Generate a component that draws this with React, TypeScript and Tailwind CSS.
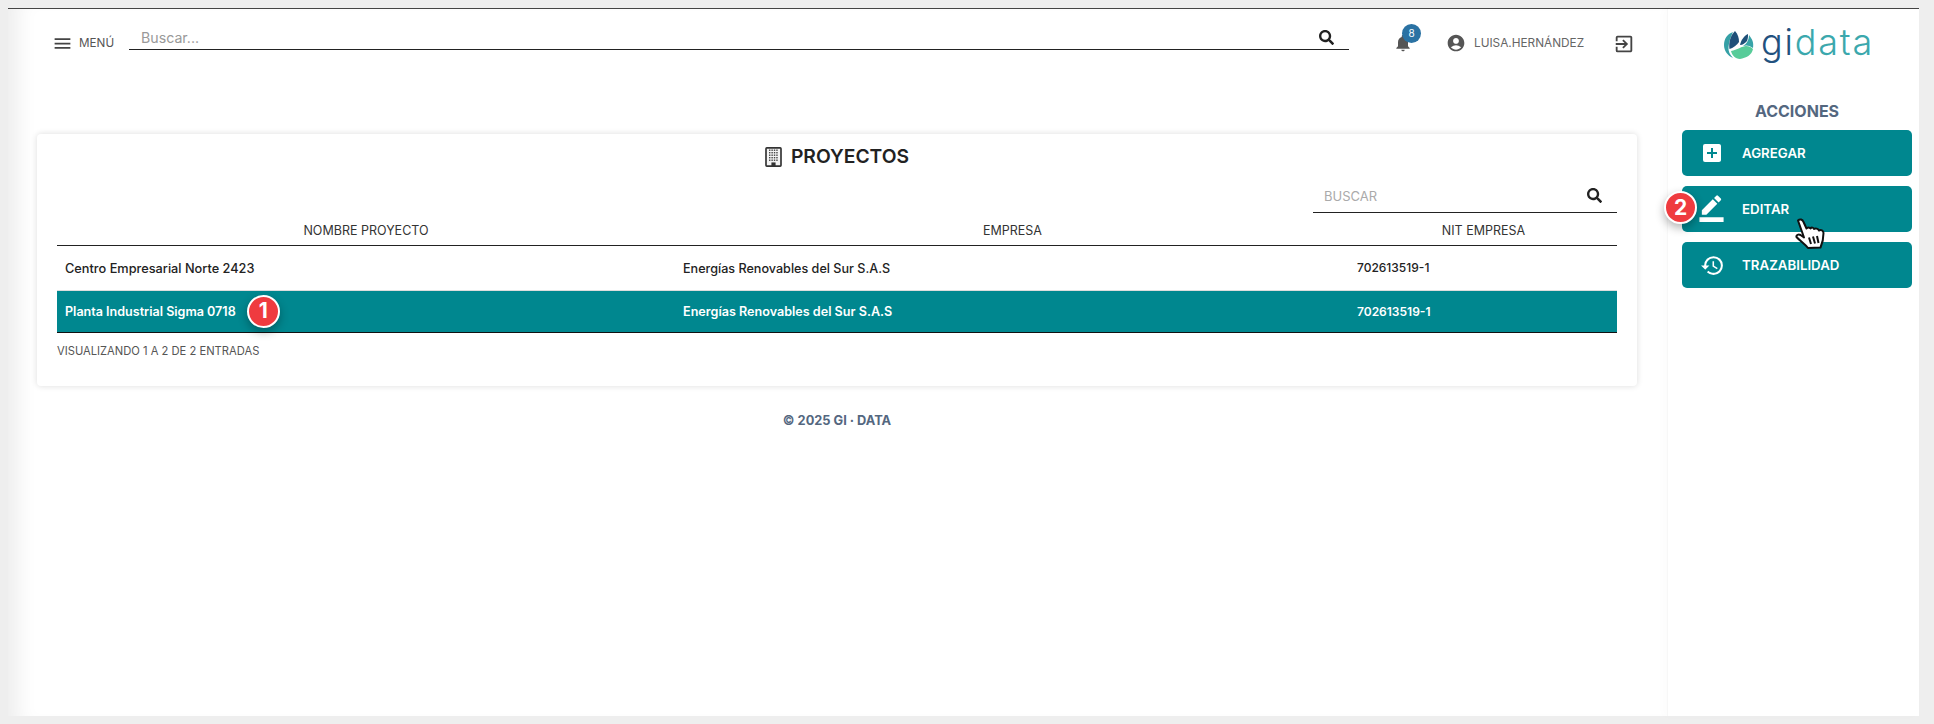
import React from "react";
import { MdMenu, MdNotifications, MdAccountCircle, MdOutlineExitToApp, MdAddBox, MdBorderColor, MdHistory } from "react-icons/md";
import { FaSearch } from "react-icons/fa";

const font = { fontFamily: "Inter, 'Noto Sans', sans-serif" };

function BuildingIcon() {
  const dots = [];
  for (let r = 0; r < 5; r++) for (let c = 0; c < 4; c++) dots.push(<rect key={`${r}-${c}`} x={4.6 + c * 2.9} y={3 + r * 3} width="1.7" height="1.7" fill="#444" />);
  return (
    <svg viewBox="0 0 20 24" className="w-[17px] h-[20px]">
      <rect x="1" y="1" width="18" height="22" rx="1" fill="#f4f4f4" stroke="#333" strokeWidth="2" />
      {dots}
      <rect x="7.5" y="18.5" width="5" height="4.5" fill="#333" />
    </svg>
  );
}

function LogoMark() {
  return (
    <svg viewBox="0 0 30 28" className="w-[30px] h-[28px] shrink-0">
      <path d="M9 1C3 3 0 8 0 14C0 20 4 25 9 27C6 24 4 20 4.5 16C5 10 7 5 9 1Z" fill="#35a0a6" />
      <path d="M11 0C6 5 4.5 12 5.5 18C9 17 13 14 15 11C15 7 14 3 11 0Z" fill="#1f5079" />
      <path d="M24 3C20 5 17 9 16 14C19 14 21 12 23 10C24 8 24 5 24 3Z" fill="#1f5079" />
      <path d="M25 4C28 8 30 11 29 17C25 14 22 14 19 15C23 13 25 8 25 4Z" fill="#38a3a8" />
      <path d="M7 20C13 19 18 15 22 15C25 15 27 16 29 18C28 24 22 27 16 28C11 28 8 24 7 20Z" fill="#57cc99" />
    </svg>
  );
}

function Hand() {
  return (
    <svg viewBox="0 0 30 31" className="w-[30px] h-[31px]">
      <path d="M3 2.5C5 0.5 7.5 1.5 8.5 4L11.5 10.5C12.5 9 14.5 9 15.5 10.5C16.5 9 18.5 9.5 19 11C20.5 10 23 10.5 24 12.5C26 11.5 28.5 12.5 28.5 15C28.5 19 27.5 25 25.5 29.5L13 30C10 26 5 23 1.5 19C1 17 3.5 16 5.5 17L9 19.5Z" fill="#fff" stroke="#111" strokeWidth="2" strokeLinejoin="round" />
      <path d="M14 19.5L16 26M18 18.5L20 25.5M22 18L23.5 25" stroke="#111" strokeWidth="2" fill="none" />
    </svg>
  );
}

function Step({ n }: { n: number }) {
  return (
    <span className="flex w-[33px] h-[33px] items-center justify-center rounded-full bg-[#ef3b3f] border-2 border-white text-white text-[21px] font-bold shadow-[0_4px_10px_rgba(0,0,0,0.3)]">
      {n}
    </span>
  );
}

function ActionButton({ icon, label, children }: { icon: React.ReactNode; label: string; children?: React.ReactNode }) {
  return (
    <div className="relative flex h-[46px] items-center rounded-[5px] bg-[#00878f] text-white">
      <span className="flex w-[60px] shrink-0 justify-center">{icon}</span>
      <span className="pt-[1px] text-[13.3px] font-semibold">{label}</span>
      {children}
    </div>
  );
}

const rows = [
  { name: "Centro Empresarial Norte 2423", company: "Energías Renovables del Sur S.A.S", nit: "702613519-1" },
  { name: "Planta Industrial Sigma 0718", company: "Energías Renovables del Sur S.A.S", nit: "702613519-1" },
];

export default function App() {
  return (
    <div style={font} className="h-[724px] bg-[#eeeeee] pt-2 pb-2 pl-2 pr-[15px]">
      <div className="flex h-[708px] border-t border-[#444] bg-white">
        <main className="flex-1 min-w-0 pl-[29px] pr-[30px] shadow-[inset_24px_0_20px_-14px_#eeeeee]">
          <header className="flex h-[53px] items-start pt-[24px] pl-[15px]">
            <MdMenu className="w-[21px] h-[21px] mr-[6px] text-[#444]" />
            <span className="text-[11.7px] leading-[21px] mr-[15px] w-[35px] text-[#555] whitespace-nowrap">MENÚ</span>
            <div className="-mt-[6px] flex h-[23px] w-[1220px] items-center justify-between border-b border-[#222] pl-[12px] pr-[15px] pb-[1px]">
              <span className="text-[14.2px] text-[#999]">Buscar...</span>
              <FaSearch className="w-[15px] h-[15px] mb-[1px] text-[#222]" />
            </div>
            <div className="relative ml-[44px]">
              <MdNotifications className="w-[20px] h-[20px] text-[#555]" />
              <span className="absolute left-[9px] top-[-9px] flex h-[19px] w-[19px] items-center justify-center rounded-full bg-[#2a72a3] text-[10px] text-white">8</span>
            </div>
            <MdAccountCircle className="ml-[33px] w-[20px] h-[20px] text-[#555] mr-[8px]" />
            <span className="text-[11.8px] leading-[20px] text-[#666] w-[139px]">LUISA.HERNÁNDEZ</span>
            <MdOutlineExitToApp className="w-[22px] h-[22px] text-[#444]" />
          </header>

          <section className="mt-[72px] h-[252px] rounded-[4px] bg-white px-[20px] shadow-[0_0_6px_rgba(0,0,0,0.14)]">
            <h1 className="flex h-[44px] items-center justify-center gap-[9px] pt-[1px] text-[19.3px] font-semibold text-[#222]">
              <BuildingIcon />
              PROYECTOS
            </h1>
            <div className="flex justify-end">
              <div className="mt-[2px] flex h-[33px] w-[304px] items-center justify-between border-b border-[#222] pl-[11px] pr-[15px] pt-[1px]">
                <span className="text-[13px] text-[#aaa]">BUSCAR</span>
                <FaSearch className="w-[15px] h-[15px] text-[#222] mb-[3px]" />
              </div>
            </div>
            <table className="w-[1560px] table-fixed border-collapse">
              <colgroup>
                <col className="w-[618px]" />
                <col className="w-[675px]" />
                <col className="w-[267px]" />
              </colgroup>
              <thead>
                <tr className="h-[32px] border-b border-[#222]">
                  {["NOMBRE PROYECTO", "EMPRESA", "NIT EMPRESA"].map((h) => (
                    <th key={h} className="pt-[5px] text-center text-[12.5px] font-normal text-[#333]">{h}</th>
                  ))}
                </tr>
              </thead>
              <tbody>
                {rows.map((r, i) => (
                  <tr key={r.name} className={i === 1 ? "h-[42px] bg-[#00878f] text-white font-semibold border-b border-[#111]" : "h-[45px] text-[#222] font-medium border-b border-[#ddd]"}>
                    <td className={i === 1 ? "pl-[8px] pt-[3px] text-[12.55px]" : "pl-[8px] pt-[2px] text-[12.75px]"}>
                      <span className="inline-flex items-center">
                        {r.name}
                        {i === 1 && (
                          <span className="relative ml-[11px] h-0 w-[33px]">
                            <span className="absolute left-0 top-[-18px]"><Step n={1} /></span>
                          </span>
                        )}
                      </span>
                    </td>
                    <td className="pl-[8px] pt-[3px] text-[12.6px]">{r.company}</td>
                    <td className="pl-[7px] pt-[1px] text-[12px]">{r.nit}</td>
                  </tr>
                ))}
              </tbody>
            </table>
            <p className="mt-[10px] text-[11.2px] text-[#555]">VISUALIZANDO 1 A 2 DE 2 ENTRADAS</p>
          </section>

          <footer className="mt-[25px] text-center text-[12.8px] font-bold text-[#54677f]">© 2025 GI · DATA</footer>
        </main>

        <aside className="w-[252px] shrink-0 border-l border-[#f7f7f7] pl-[14px] pr-[7px] shadow-[-4px_0_8px_rgba(0,0,0,0.015)]">
          <div className="flex h-[62px] items-center gap-[7px] pt-[10px] pl-[42px]">
            <LogoMark />
            <span className="text-[36px] leading-none font-light tracking-[1.8px] pb-[6px]">
              <span className="text-[#22517e]">gi</span>
              <span className="text-[#3ba8ad]">data</span>
            </span>
          </div>
          <h2 className="mt-[28px] text-center text-[16px] font-bold text-[#54677f]">ACCIONES</h2>
          <div className="mt-[7px] flex flex-col gap-[10px]">
            <ActionButton icon={<MdAddBox className="w-[24px] h-[24px]" />} label="AGREGAR" />
            <ActionButton icon={<MdBorderColor className="w-[29px] h-[29px] mb-[4px] mr-[1px]" />} label="EDITAR">
              <span className="absolute left-[-18px] top-[5px]"><Step n={2} /></span>
              <span className="absolute left-[113px] top-[32px] z-10"><Hand /></span>
            </ActionButton>
            <ActionButton icon={<MdHistory className="w-[25px] h-[25px]" />} label="TRAZABILIDAD" />
          </div>
        </aside>
      </div>
    </div>
  );
}
